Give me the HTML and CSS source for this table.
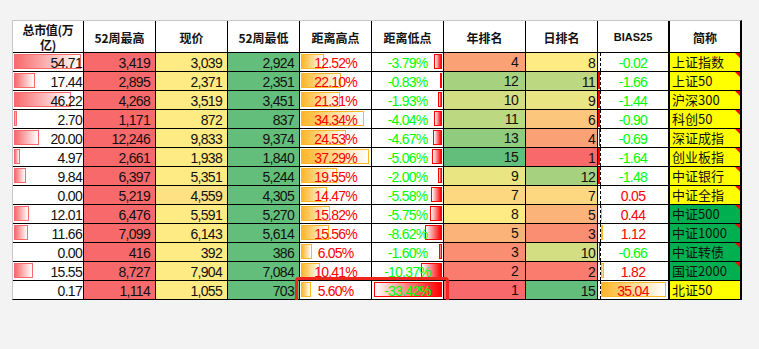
FILE: index.html
```html
<!DOCTYPE html>
<html lang="zh">
<head>
<meta charset="utf-8">
<title>指数估值表</title>
<link rel="stylesheet" href="styles.css">
</head>
<body>
<div class="wrap">
  <div class="sheet">
    <div class="h h2"><span class="ln">总市值(万</span><span class="ln">亿)</span></div>
    <div class="h">52周最高</div>
    <div class="h">现价</div>
    <div class="h">52周最低</div>
    <div class="h">距离高点</div>
    <div class="h">距离低点</div>
    <div class="h">年排名</div>
    <div class="h">日排名</div>
    <div class="h bias-h edge"><span class="lat">BIAS25</span></div>
    <div class="h">简称</div>

    <!-- row 1 -->
    <div class="c r p1"><i class="bar b-cap" style="width:67px"></i><span>54.71</span></div>
    <div class="c r p5 hi">3,419</div>
    <div class="c r p5 cur">3,039</div>
    <div class="c r p5 lo">2,924</div>
    <div class="c ctr pct up"><i class="bar b-hi" style="width:22.8px"></i><span>12.52%</span></div>
    <div class="c ctr pct dn"><i class="bar b-lo" style="width:7.7px"></i><span>-3.79%</span></div>
    <div class="c r p7 s4">4</div>
    <div class="c r p2 s8">8</div>
    <div class="c ctr edge dn"><i class="axis"></i><span>-0.02</span></div>
    <div class="c name y note">上证指数</div>

    <!-- row 2 -->
    <div class="c r p1"><i class="bar b-cap" style="width:21.4px"></i><span>17.44</span></div>
    <div class="c r p5 hi">2,895</div>
    <div class="c r p5 cur">2,371</div>
    <div class="c r p5 lo">2,351</div>
    <div class="c ctr pct up"><i class="bar b-hi" style="width:40.3px"></i><span>22.10%</span></div>
    <div class="c ctr pct dn"><i class="bar b-lo" style="width:1.7px"></i><span>-0.83%</span></div>
    <div class="c r p7 s12">12</div>
    <div class="c r p2 s11">11</div>
    <div class="c ctr edge dn"><i class="bar b-neg" style="width:2px"></i><i class="axis"></i><span>-1.66</span></div>
    <div class="c name y note">上证50</div>

    <!-- row 3 -->
    <div class="c r p1"><i class="bar b-cap" style="width:56.6px"></i><span>46.22</span></div>
    <div class="c r p5 hi">4,268</div>
    <div class="c r p5 cur">3,519</div>
    <div class="c r p5 lo">3,451</div>
    <div class="c ctr pct up"><i class="bar b-hi" style="width:38.9px"></i><span>21.31%</span></div>
    <div class="c ctr pct dn"><i class="bar b-lo" style="width:3.9px"></i><span>-1.93%</span></div>
    <div class="c r p7 s10">10</div>
    <div class="c r p2 s9">9</div>
    <div class="c ctr edge dn"><i class="bar b-neg" style="width:2px"></i><i class="axis"></i><span>-1.44</span></div>
    <div class="c name y note">沪深300</div>

    <!-- row 4 -->
    <div class="c r p1"><i class="bar b-cap" style="width:3.3px"></i><span>2.70</span></div>
    <div class="c r p5 hi">1,171</div>
    <div class="c r p5 cur">872</div>
    <div class="c r p5 lo">837</div>
    <div class="c ctr pct up"><i class="bar b-hi" style="width:62.6px"></i><span>34.34%</span></div>
    <div class="c ctr pct dn"><i class="bar b-lo" style="width:8.2px"></i><span>-4.04%</span></div>
    <div class="c r p7 s11">11</div>
    <div class="c r p2 s6">6</div>
    <div class="c ctr edge dn"><i class="bar b-neg" style="width:1.7px"></i><i class="axis"></i><span>-0.90</span></div>
    <div class="c name y note">科创50</div>

    <!-- row 5 -->
    <div class="c r p1"><i class="bar b-cap" style="width:24.5px"></i><span>20.00</span></div>
    <div class="c r p5 hi">12,246</div>
    <div class="c r p5 cur">9,833</div>
    <div class="c r p5 lo">9,374</div>
    <div class="c ctr pct up"><i class="bar b-hi" style="width:44.7px"></i><span>24.53%</span></div>
    <div class="c ctr pct dn"><i class="bar b-lo" style="width:9.5px"></i><span>-4.67%</span></div>
    <div class="c r p7 s13">13</div>
    <div class="c r p2 s4">4</div>
    <div class="c ctr edge dn"><i class="bar b-neg" style="width:1.3px"></i><i class="axis"></i><span>-0.69</span></div>
    <div class="c name y note">深证成指</div>

    <!-- row 6 -->
    <div class="c r p1"><i class="bar b-cap" style="width:6.1px"></i><span>4.97</span></div>
    <div class="c r p5 hi">2,661</div>
    <div class="c r p5 cur">1,938</div>
    <div class="c r p5 lo">1,840</div>
    <div class="c ctr pct up"><i class="bar b-hi" style="width:68px"></i><span>37.29%</span></div>
    <div class="c ctr pct dn"><i class="bar b-lo" style="width:10.3px"></i><span>-5.06%</span></div>
    <div class="c r p7 s15">15</div>
    <div class="c r p2 s1">1</div>
    <div class="c ctr edge dn"><i class="bar b-neg" style="width:2px"></i><i class="axis"></i><span>-1.64</span></div>
    <div class="c name y note">创业板指</div>

    <!-- row 7 -->
    <div class="c r p1"><i class="bar b-cap" style="width:12.1px"></i><span>9.84</span></div>
    <div class="c r p5 hi">6,397</div>
    <div class="c r p5 cur">5,351</div>
    <div class="c r p5 lo">5,244</div>
    <div class="c ctr pct up"><i class="bar b-hi" style="width:35.6px"></i><span>19.55%</span></div>
    <div class="c ctr pct dn"><i class="bar b-lo" style="width:4.1px"></i><span>-2.00%</span></div>
    <div class="c r p7 s9">9</div>
    <div class="c r p2 s12">12</div>
    <div class="c ctr edge dn"><i class="bar b-neg" style="width:2px"></i><i class="axis"></i><span>-1.48</span></div>
    <div class="c name y note">中证银行</div>

    <!-- row 8 -->
    <div class="c r p1"><span>0.00</span></div>
    <div class="c r p5 hi">5,219</div>
    <div class="c r p5 cur2">4,559</div>
    <div class="c r p5 lo">4,305</div>
    <div class="c ctr pct up"><i class="bar b-hi" style="width:26.4px"></i><span>14.47%</span></div>
    <div class="c ctr pct dn"><i class="bar b-lo" style="width:11.4px"></i><span>-5.58%</span></div>
    <div class="c r p7 s7">7</div>
    <div class="c r p2 s7">7</div>
    <div class="c ctr edge up"><i class="axis"></i><span>0.05</span></div>
    <div class="c name y note">中证全指</div>

    <!-- row 9 -->
    <div class="c r p1"><i class="bar b-cap" style="width:14.7px"></i><span>12.01</span></div>
    <div class="c r p5 hi">6,476</div>
    <div class="c r p5 cur">5,591</div>
    <div class="c r p5 lo">5,270</div>
    <div class="c ctr pct up"><i class="bar b-hi" style="width:28.8px"></i><span>15.82%</span></div>
    <div class="c ctr pct dn"><i class="bar b-lo" style="width:11.7px"></i><span>-5.75%</span></div>
    <div class="c r p7 s8">8</div>
    <div class="c r p2 s5">5</div>
    <div class="c ctr edge up"><i class="axis"></i><i class="bar b-pos thin" style="width:1px"></i><span>0.44</span></div>
    <div class="c name g note">中证500</div>

    <!-- row 10 -->
    <div class="c r p1"><i class="bar b-cap" style="width:14.3px"></i><span>11.66</span></div>
    <div class="c r p5 hi">7,099</div>
    <div class="c r p5 cur">6,143</div>
    <div class="c r p5 lo">5,614</div>
    <div class="c ctr pct up"><i class="bar b-hi" style="width:28.4px"></i><span>15.56%</span></div>
    <div class="c ctr pct dn"><i class="bar b-lo" style="width:17.5px"></i><span>-8.62%</span></div>
    <div class="c r p7 s5">5</div>
    <div class="c r p2 s3">3</div>
    <div class="c ctr edge up"><i class="axis"></i><i class="bar b-pos" style="width:2.1px"></i><span>1.12</span></div>
    <div class="c name g note">中证1000</div>

    <!-- row 11 -->
    <div class="c r p1"><span>0.00</span></div>
    <div class="c r p5 hi">416</div>
    <div class="c r p5 cur">392</div>
    <div class="c r p5 lo">386</div>
    <div class="c ctr pct up"><i class="bar b-hi" style="width:11px"></i><span>6.05%</span></div>
    <div class="c ctr pct dn"><i class="bar b-lo" style="width:3.3px"></i><span>-1.60%</span></div>
    <div class="c r p7 s3">3</div>
    <div class="c r p2 s10">10</div>
    <div class="c ctr edge dn"><i class="bar b-neg" style="width:1.2px"></i><i class="axis"></i><span>-0.66</span></div>
    <div class="c name g note">中证转债</div>

    <!-- row 12 -->
    <div class="c r p1"><i class="bar b-cap" style="width:19px"></i><span>15.55</span></div>
    <div class="c r p5 hi">8,727</div>
    <div class="c r p5 cur">7,904</div>
    <div class="c r p5 lo">7,084</div>
    <div class="c ctr pct up"><i class="bar b-hi" style="width:19px"></i><span>10.41%</span></div>
    <div class="c ctr pct dn"><i class="bar b-lo" style="width:21.1px"></i><span>-10.37%</span></div>
    <div class="c r p7 s2">2</div>
    <div class="c r p2 s2">2</div>
    <div class="c ctr edge up"><i class="axis"></i><i class="bar b-pos" style="width:3.4px"></i><span>1.82</span></div>
    <div class="c name g note">国证2000</div>

    <!-- row 13 -->
    <div class="c r p1"><span>0.17</span></div>
    <div class="c r p5 hi">1,114</div>
    <div class="c r p5 cur">1,055</div>
    <div class="c r p5 lo">703</div>
    <div class="c ctr pct up"><i class="bar b-hi" style="width:10.2px"></i><span>5.60%</span></div>
    <div class="c ctr pct dn"><i class="bar b-lo" style="width:68px"></i><span>-33.42%</span></div>
    <div class="c r p7 s1">1</div>
    <div class="c r p2 s15">15</div>
    <div class="c ctr edge up"><i class="axis"></i><i class="bar b-pos" style="width:65px"></i><span>35.04</span></div>
    <div class="c name y">北证50</div>
  </div>
  <div class="mark"></div>
</div>
</body>
</html>
```

FILE: styles.css
```css
html, body {
  margin: 0;
  padding: 0;
  background: #f3f3f3;
}

.wrap {
  position: relative;
  margin: 20px 0 0 12px;
  width: max-content;
}

.sheet {
  display: grid;
  grid-template-columns: 70px 71px 71px 71px 71px 71px 81px 71px 71px 70px;
  grid-template-rows: 31px repeat(13, 18px);
  gap: 1px;
  background: #000;
  border-left: 1px solid #c8c8c8;
  border-top: 1px solid #c8c8c8;
  border-right: 2px solid #000;
  border-bottom: 1px solid #000;
}

/* header */
.h {
  background: #fff;
  display: flex;
  align-items: center;
  justify-content: center;
  text-align: center;
  padding-top: 2px;
  font-family: "Noto Sans CJK SC", "Liberation Sans", sans-serif;
  font-weight: bold;
  font-size: 12px;
  line-height: 15px;
  color: #111;
  overflow: hidden;
  box-sizing: border-box;
}

.h2 {
  flex-direction: column;
  align-items: center;
  justify-content: flex-start;
  padding-top: 1px;
  letter-spacing: -0.3px;
}

.ln {
  display: block;
  height: 15px;
  line-height: 15px;
}

.lat {
  font-family: "Liberation Sans", Arial, sans-serif;
  font-size: 11px;
}

/* data cells */
.c {
  position: relative;
  background: #fff;
  display: flex;
  align-items: flex-end;
  overflow: hidden;
  white-space: nowrap;
  box-sizing: border-box;
  font-family: "Liberation Sans", Arial, sans-serif;
  font-size: 14px;
  line-height: 16px;
  letter-spacing: -0.7px;
  color: #111;
}

.c span {
  position: relative;
}

.r { justify-content: flex-end; }
.ctr { justify-content: center; }
.p1 { padding-right: 1px; }
.p2 { padding-right: 2px; }
.p5 { padding-right: 5px; }
.p7 { padding-right: 7px; line-height: 18px; }

.pct { letter-spacing: -0.8px; }

.edge { border-right: 1px solid #000; }

.hi { background: #f8696b; }
.cur { background: #ffeb84; }
.cur2 { background: #fee182; }
.lo { background: #63be7b; }

.up { color: #ff0000; }
.dn { color: #00ff00; }

/* 3-colour rank scale */
.s1 { background: #f8696b; }
.s2 { background: #f97c6f; }
.s3 { background: #fa8e72; }
.s4 { background: #fba176; }
.s5 { background: #fcb379; }
.s6 { background: #fdc67d; }
.s7 { background: #fed880; }
.s8 { background: #ffeb84; }
.s9 { background: #e9e583; }
.s10 { background: #d2de81; }
.s11 { background: #bcd880; }
.s12 { background: #a6d27f; }
.s13 { background: #90cb7e; }
.s14 { background: #79c57c; }
.s15 { background: #63be7b; }

/* data bars */
.bar {
  position: absolute;
  top: 1px;
  height: 15px;
  box-sizing: border-box;
  border: 1px solid;
}

.b-cap {
  left: 1px;
  border-color: #f8696b;
  background: linear-gradient(to right, #f8696b, #ffffff);
}

.b-hi {
  left: 1px;
  border-color: #ffb628;
  background: linear-gradient(to right, #ffb628, #ffffff);
}

.b-lo {
  right: 1px;
  border-color: #ff0000;
  background: linear-gradient(to left, #ff0000, #ffffff);
}

.b-neg {
  right: calc(100% - 2px);
  top: 0;
  height: 17px;
  border: 0;
  background: #ff0000;
}

.b-pos {
  left: 3px;
  border-color: #ffb628;
  background: linear-gradient(to right, #ffb628, #ffffff);
}

.b-pos.thin {
  border: 0;
  background: #ffb628;
}

.axis {
  position: absolute;
  left: 2px;
  top: 0;
  bottom: 0;
  width: 1px;
  background: repeating-linear-gradient(to bottom, #000 0 3px, transparent 3px 5px);
}

/* name column */
.name {
  align-items: center;
  justify-content: flex-start;
  padding-left: 2px;
  font-family: "Noto Sans CJK SC", "Liberation Sans", sans-serif;
  font-size: 13px;
  line-height: 18px;
  letter-spacing: 0;
  color: #111;
}

.y { background: #ffff00; }
.g { background: #00b050; }

.note::after {
  content: "";
  position: absolute;
  top: 0;
  right: 0;
  width: 0;
  height: 0;
  border-style: solid;
  border-width: 0 5px 5px 0;
  border-color: transparent #ff0000 transparent transparent;
}

/* annotation frame */
.mark {
  position: absolute;
  left: 283px;
  top: 257px;
  width: 154px;
  height: 31px;
  box-sizing: border-box;
  border: 3px solid #f0261c;
  border-radius: 4px;
}
```
